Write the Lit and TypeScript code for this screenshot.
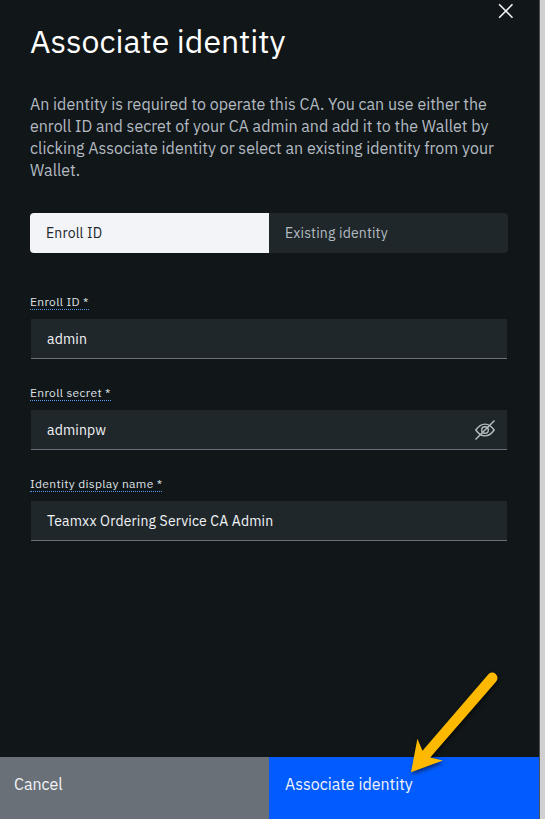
import { LitElement, html, css, svg, nothing } from "lit";
import { customElement, property } from "lit/decorators.js";

const eyeOff = svg`
  <path d="M.8 10 C4 5.5 6.9 4.1 10 4.1 S16 5.5 19.2 10 C16 14.5 13.1 15.9 10 15.9 S4 14.5 .8 10 Z"/>
  <circle cx="10" cy="10" r="3.3"/>
  <path d="M.5 19.5 L19.5 .5"/>`;

@customElement("text-field")
class TextField extends LitElement {
  @property() label = "";
  @property() value = "";
  @property({ type: Boolean }) secret = false;

  static styles = css`
    :host { display: block; height: 91px; }
    .label {
      display: block; width: max-content; height: 14px; box-sizing: border-box;
      border-bottom: 1px dotted #5596e6; color: #dde1e6;
      font-size: 12px; line-height: 12px; letter-spacing: 0.32px; white-space: nowrap;
    }
    .box {
      display: flex; align-items: center; justify-content: space-between;
      box-sizing: border-box; height: 40px; margin: 9px 1px 0;
      padding: 0 12px 0 16px; background: #20272a; border-bottom: 1px solid #697077;
      color: #f2f4f8; font-size: 14px; letter-spacing: 0.16px;
    }
    svg { width: 20px; height: 20px; fill: none; stroke: #b5bdc2; stroke-width: 1.4; }
  `;

  render() {
    return html`
      <span class="label">${this.label}</span>
      <div class="box">
        <span>${this.value}</span>
        ${this.secret ? html`<svg viewBox="0 0 20 20">${eyeOff}</svg>` : nothing}
      </div>`;
  }
}

@customElement("app-root")
class AppRoot extends LitElement {
  static styles = css`
    :host {
      display: flex; position: relative; width: 545px; height: 819px; overflow: hidden;
      background: #d0d0d0; font-family: "IBM Plex Sans", Roboto, "Noto Sans", sans-serif;
    }
    .panel { display: flex; flex-direction: column; width: 539px; background: #111619; border-right: 1px solid #4b5054; }
    .body { flex: 1; padding: 0 31px 0 30px; }
    .top { display: flex; justify-content: space-between; height: 93px; }
    h1 { margin: 21px 0 0; color: #fff; font-weight: 400; font-size: 32px; line-height: 40px; white-space: nowrap; }
    .close { width: 16px; height: 16px; margin: 3px -6px 0 0; stroke: #f2f4f8; stroke-width: 1.6; fill: none; }
    .copy { color: #b3bbc1; font-size: 16px; line-height: 22px; height: 120px; }
    .copy span { display: block; width: max-content; white-space: nowrap; }
    .tabs { display: flex; height: 40px; border-radius: 4px; overflow: hidden; font-size: 14px; line-height: 40px; margin-bottom: 43px; }
    .tab { flex: 1; padding-left: 16px; background: #20272a; color: #b3bbc1; letter-spacing: 0.16px; }
    .active { background: #f2f4f8; color: #21272a; }
    .actions { display: flex; height: 62px; font-size: 16px; line-height: 54px; }
    .cancel { width: 269px; box-sizing: border-box; padding-left: 14px; background: #697077; color: #f2f4f8; }
    .submit { flex: 1; padding-left: 16px; background: #005cff; color: #f2f4f8; }
    .arrow { position: absolute; left: 400px; top: 662px; width: 110px; height: 125px; filter: drop-shadow(1px 2px 2px rgba(0, 0, 0, 0.6)); }
  `;

  render() {
    return html`
      <div class="panel">
        <div class="body">
          <div class="top">
            <h1>Associate identity</h1>
            <svg class="close" viewBox="0 0 16 16"><path d="M1.1 1.3 L14.5 14.7 M14.5 1.3 L1.1 14.7"/></svg>
          </div>
          <div class="copy">
            <span>An identity is required to operate this CA. You can use either the</span>
            <span>enroll ID and secret of your CA admin and add it to the Wallet by</span>
            <span>clicking Associate identity or select an existing identity from your</span>
            <span>Wallet.</span>
          </div>
          <div class="tabs">
            <div class="tab active">Enroll ID</div>
            <div class="tab">Existing identity</div>
          </div>
          <text-field label="Enroll ID *" value="admin"></text-field>
          <text-field label="Enroll secret *" value="adminpw" secret></text-field>
          <text-field label="Identity display name *" value="Teamxx Ordering Service CA Admin"></text-field>
        </div>
        <div class="actions">
          <div class="cancel">Cancel</div>
          <div class="submit">Associate identity</div>
        </div>
      </div>
      <svg class="arrow" viewBox="400 662 110 125">
        <path fill="#fdb900" d="M488.2 674.4 A5.3 5.3 0 0 1 496.2 681.4 L430.2 757.6 L442.9 760.4 L411 772.3 L417.4 738.8 L422.5 750.8 Z"/>
      </svg>`;
  }
}
